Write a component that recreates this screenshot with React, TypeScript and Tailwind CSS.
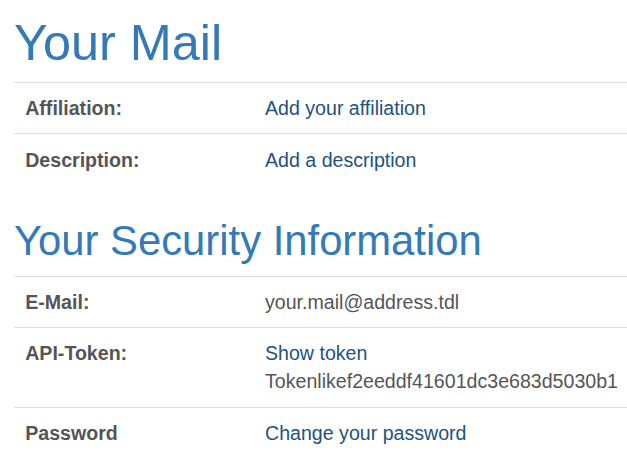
const font = { fontFamily: '"Liberation Sans", Arial, sans-serif' };

interface Row {
    label: string;
    values: { text: string; link?: boolean }[];
}

const mailRows: Row[] = [
    { label: "Affiliation:", values: [{ text: "Add your affiliation", link: true }] },
    { label: "Description:", values: [{ text: "Add a description", link: true }] },
];

const securityRows: Row[] = [
    { label: "E-Mail:", values: [{ text: "your.mail@address.tdl" }] },
    {
        label: "API-Token:",
        values: [
            { text: "Show token", link: true },
            { text: "Tokenlikef2eeddf41601dc3e683d5030b1" },
        ],
    },
    { label: "Password", values: [{ text: "Change your password", link: true }] },
];

const InfoTable = ({ rows }: { rows: Row[] }) => {
    return (
        <div className="w-full text-[19.6px] leading-[28px]">
            {rows.map((row, i) => (
                <div key={i} className="flex border-t border-[#dddddd]">
                    <div className="w-[251px] shrink-0 p-[11.2px] font-bold text-[#555555]">{row.label}</div>
                    <div className="py-[11.2px] whitespace-nowrap">
                        {row.values.map((v, j) => (
                            <div key={j} className={v.link ? "text-[#23527c]" : "text-[#555555]"}>
                                {v.text}
                            </div>
                        ))}
                    </div>
                </div>
            ))}
        </div>
    );
};

const App = () => {
    return (
        <div className="w-[627px] h-[471px] overflow-hidden bg-white pl-[14px]" style={font}>
            <h1 className="text-[50.4px] leading-[55px] text-[#337ab7] pt-[15px] mb-[12px]">Your Mail</h1>
            <InfoTable rows={mailRows} />
            <h2 className="text-[41.8px] leading-[46px] text-[#337ab7] mt-[33px] mb-[12px]">Your Security Information</h2>
            <InfoTable rows={securityRows} />
        </div>
    );
};

export default App;
